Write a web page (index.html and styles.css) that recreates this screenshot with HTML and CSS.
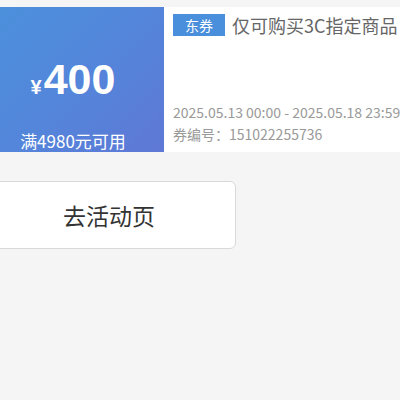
FILE: index.html
```html
<!doctype html>
<html>
<head>
	<meta http-equiv="Content-Type" content="text/html; charset=UTF-8">
	<title>优惠券</title>
	<link rel="stylesheet" href="styles.css">
</head>
<body>
	<div class="page">
		<div class="coupon">
			<div class="coupon__value">
				<div class="coupon__price"><span class="coupon__yen">¥</span>400</div>
				<div class="coupon__limit">满4980元可用</div>
			</div>
			<div class="coupon__info">
				<div class="coupon__title">
					<span class="coupon__tag">东券</span>
					<span class="coupon__name">仅可购买3C指定商品</span>
				</div>
				<div class="coupon__meta">
					<p>2025.05.13 00:00 - 2025.05.18 23:59</p>
					<p>券编号：151022255736</p>
				</div>
			</div>
		</div>
		<a class="btn" href="#">去活动页</a>
	</div>
</body>
</html>
```

FILE: styles.css
```css
*{box-sizing:border-box;margin:0;padding:0}
html,body{overflow:hidden}
body{background-color:#f5f5f5;font-family:"Noto Sans CJK SC","Noto Sans",sans-serif;color:#333}
.page{margin-left:-18px;width:520px;padding-top:7px}
.coupon{display:flex;height:145px;background-color:#fff}
.coupon__value{width:182px;flex:none;display:flex;flex-direction:column;align-items:center;color:#fff;
background:linear-gradient(135deg,#4b91dc 0%,#5485da 55%,#5f78d6 100%)}
.coupon__price{font-family:"Liberation Sans",Arial,sans-serif;font-weight:700;font-size:43px;line-height:1;margin-top:51px}
.coupon__yen{font-size:20px;margin-right:2px}
.coupon__limit{font-size:17px;line-height:20px;margin-top:auto;margin-bottom:1px}
.coupon__info{flex:1;padding:7px 0 0 9px;display:flex;flex-direction:column;white-space:nowrap}
.coupon__title{display:flex;align-items:center;height:22px}
.coupon__tag{background-color:#4a8fdc;color:#fff;font-size:14px;line-height:22px;padding:0 12px;margin-right:7px}
.coupon__name{color:#666;font-size:18px}
.coupon__meta{margin-top:auto;margin-bottom:7px;color:#999;font-size:14px;line-height:22px}
.btn{display:flex;align-items:center;justify-content:center;width:254px;height:68px;margin-top:29px;
background-color:#fff;border:1px solid #d9d9d9;border-radius:6px;color:#333;font-size:23px;text-decoration:none}
```
